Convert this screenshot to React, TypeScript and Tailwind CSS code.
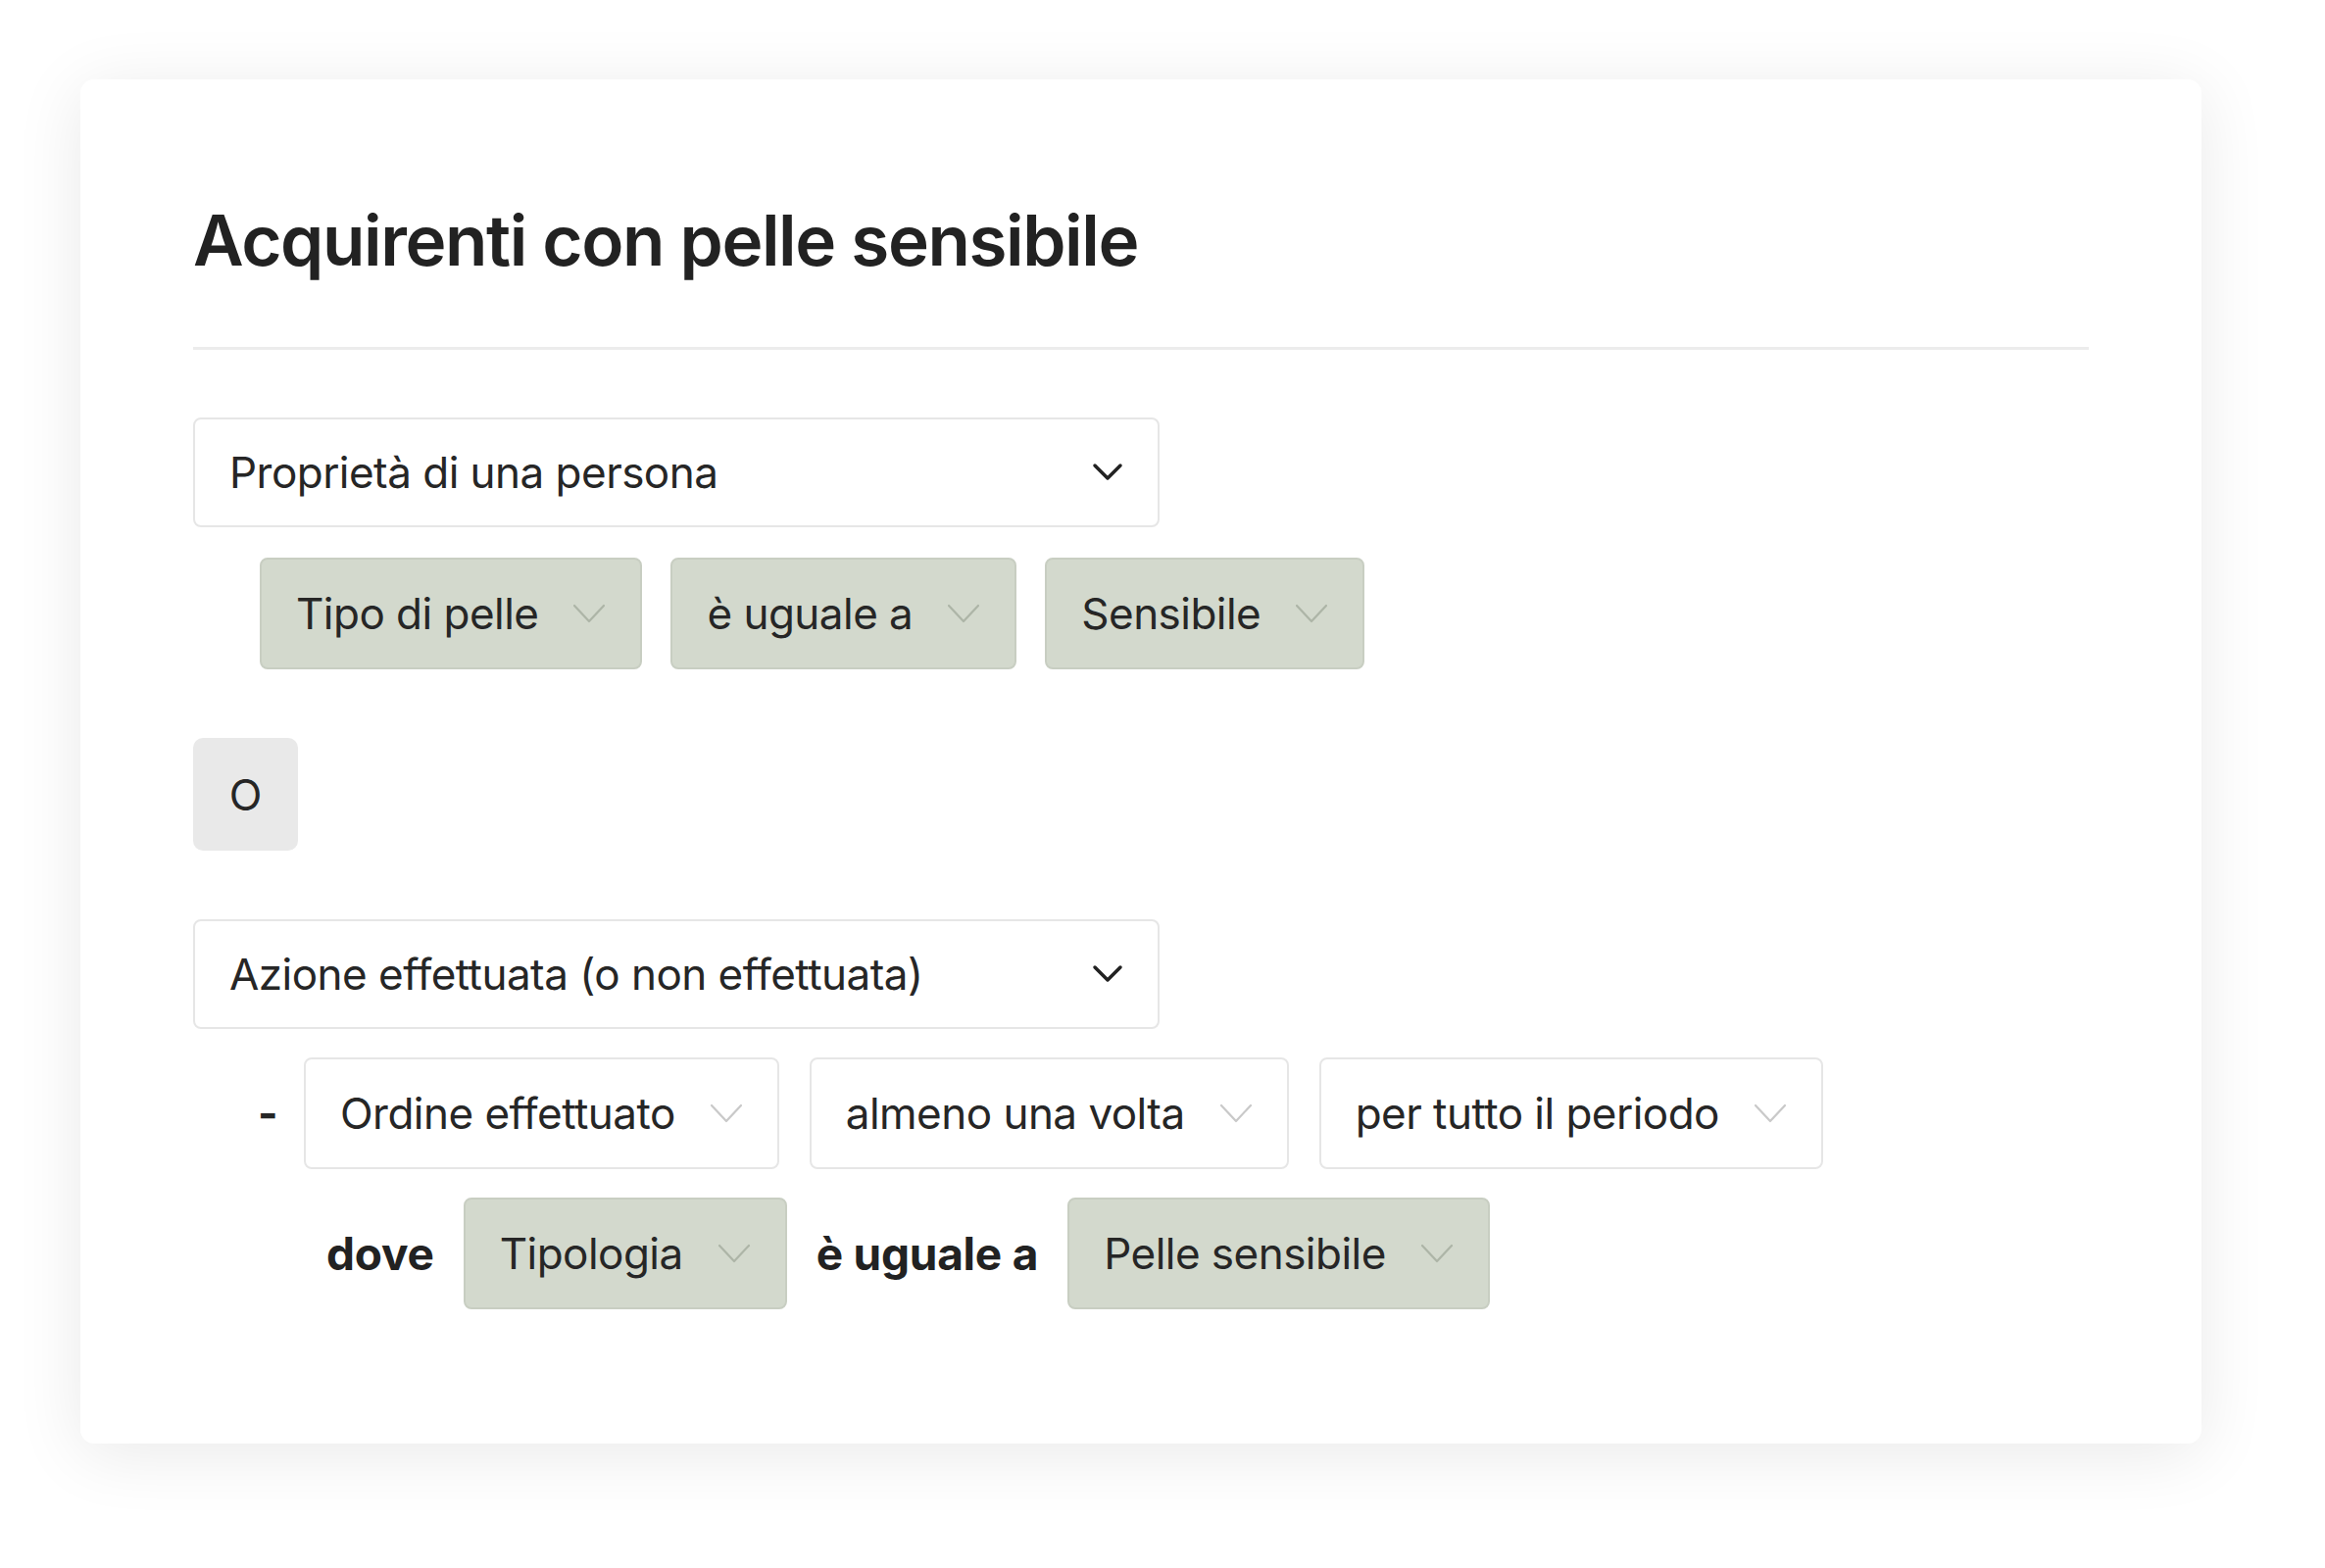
import React from 'react';

function DarkChevron() {
    return (
        <svg width="32" height="22" viewBox="0 0 32 22" fill="none">
            <path d="M3 4 L16 17 L29 4" stroke="#222222" strokeWidth="3.5" strokeLinecap="round" strokeLinejoin="round" />
        </svg>
    );
}

function LightChevron({ color }: { color: string }) {
    return (
        <svg width="34" height="20" viewBox="0 0 34 20" fill="none">
            <path d="M2 2 L17 18 L32 2" stroke={color} strokeWidth="2.2" strokeLinecap="round" strokeLinejoin="round" />
        </svg>
    );
}

function BigSelect({ label }: { label: string }) {
    return (
        <div className="w-[986px] h-[112px] flex items-center justify-between pl-[35px] pr-[35px] bg-white border-2 border-[#e6e6e6] rounded-[8px]">
            <span className="text-[44px] leading-none tracking-[-0.012em] text-[#262626]">{label}</span>
            <DarkChevron />
        </div>
    );
}

function Pill({ label, green }: { label: string; green?: boolean }) {
    return (
        <div
            className={
                green
                    ? 'h-[114px] flex items-center gap-[35px] pl-[35px] pr-[35px] bg-[#d3d9cd] border-2 border-[#c8cec2] rounded-[8px]'
                    : 'h-[114px] flex items-center gap-[35px] pl-[35px] pr-[35px] bg-white border-2 border-[#e6e6e6] rounded-[8px]'
            }
        >
            <span className="text-[44px] leading-none tracking-[-0.012em] text-[#262626] whitespace-nowrap">{label}</span>
            <LightChevron color={green ? '#adb5a7' : '#c9c9c9'} />
        </div>
    );
}

export default function App() {
    return (
        <div className="min-h-screen bg-white pl-[82px] pt-[81px] font-['Inter','Liberation_Sans',sans-serif]">
            <div className="w-[2164px] h-[1392px] bg-white rounded-[14px] shadow-[0_10px_70px_rgba(0,0,0,0.09)] px-[115px] pt-[129px]">
                <h1 className="text-[71px] leading-none font-semibold tracking-[-0.02em] text-[#222222]">
                    Acquirenti con pelle sensibile
                </h1>
                <div className="mt-[73px] h-[3px] bg-[#ececec]" />

                {/* Person property */}
                <div className="mt-[69px]">
                    <BigSelect label="Proprietà di una persona" />
                </div>
                <div className="mt-[31px] pl-[68px] flex items-center gap-[29px]">
                    <Pill label="Tipo di pelle" green />
                    <Pill label="è uguale a" green />
                    <Pill label="Sensibile" green />
                </div>

                {/* Or */}
                <div className="mt-[70px] w-[107px] h-[115px] flex items-center justify-center bg-[#e9e9e9] rounded-[10px]">
                    <span className="text-[44px] leading-none text-[#262626]">O</span>
                </div>

                {/* Action */}
                <div className="mt-[70px]">
                    <BigSelect label="Azione effettuata (o non effettuata)" />
                </div>
                <div className="mt-[29px] pl-[66px] flex items-center">
                    <span className="w-[47px] text-[44px] leading-none font-bold text-[#262626]">-</span>
                    <div className="flex items-center gap-[31px]">
                        <Pill label="Ordine effettuato" />
                        <Pill label="almeno una volta" />
                        <Pill label="per tutto il periodo" />
                    </div>
                </div>
                <div className="mt-[29px] pl-[136px] flex items-center gap-[30px]">
                    <span className="text-[46px] leading-none font-bold tracking-[-0.005em] text-[#222222]">dove</span>
                    <Pill label="Tipologia" green />
                    <span className="text-[46px] leading-none font-bold tracking-[-0.005em] text-[#222222]">è uguale a</span>
                    <Pill label="Pelle sensibile" green />
                </div>
            </div>
        </div>
    );
}
